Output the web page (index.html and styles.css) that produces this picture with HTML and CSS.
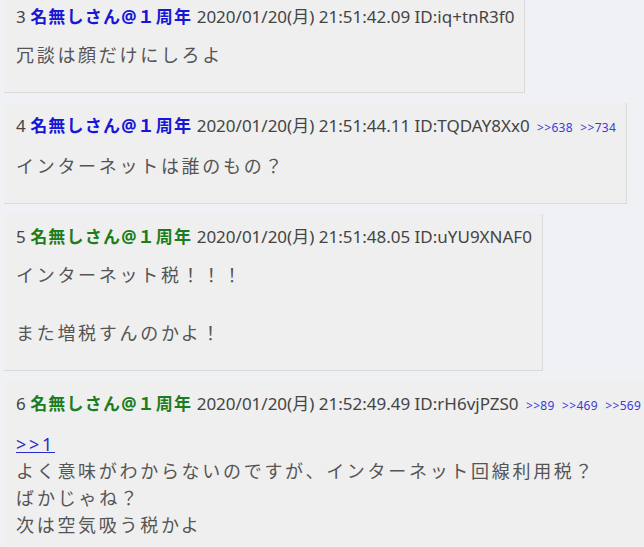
FILE: index.html
```html
<!DOCTYPE html>
<html lang="ja">
<head>
  <meta charset="UTF-8">
  <meta name="viewport" content="width=device-width, initial-scale=1.0">
  <title>スレッド</title>
  <link rel="stylesheet" href="styles.css">
</head>
<body>
  <div class="thread">
    <div class="post">
      <div class="meta">
        <span class="number">3</span>
        <span class="name">名無しさん@１周年</span>
        <span class="date">2020/01/20(月) 21:51:42.09</span>
        <span class="uid">ID:iq+tnR3f0</span>
      </div>
      <div class="message">冗談は顔だけにしろよ</div>
    </div>

    <div class="post">
      <div class="meta">
        <span class="number">4</span>
        <span class="name">名無しさん@１周年</span>
        <span class="date">2020/01/20(月) 21:51:44.11</span>
        <span class="uid">ID:TQDAY8Xx0</span>
        <span class="replies"><a href="#">&gt;&gt;638</a> <a href="#">&gt;&gt;734</a></span>
      </div>
      <div class="message">インターネットは誰のもの？</div>
    </div>

    <div class="post">
      <div class="meta">
        <span class="number">5</span>
        <span class="name green">名無しさん@１周年</span>
        <span class="date">2020/01/20(月) 21:51:48.05</span>
        <span class="uid">ID:uYU9XNAF0</span>
      </div>
      <div class="message">インターネット税！！！<br><br>また増税すんのかよ！</div>
    </div>

    <div class="post">
      <div class="meta">
        <span class="number">6</span>
        <span class="name green">名無しさん@１周年</span>
        <span class="date">2020/01/20(月) 21:52:49.49</span>
        <span class="uid">ID:rH6vjPZS0</span>
        <span class="replies"><a href="#">&gt;&gt;89</a> <a href="#">&gt;&gt;469</a> <a href="#">&gt;&gt;569</a></span>
      </div>
      <div class="message tight"><a href="#" class="anchor">&gt;&gt;1</a><br>よく意味がわからないのですが、インターネット回線利用税？<br>ばかじゃね？<br>次は空気吸う税かよ</div>
    </div>
  </div>
</body>
</html>
```

FILE: styles.css
```css
html, body {
  overflow: hidden;
}

body {
  margin: 0;
  padding: 0 0 0 4px;
  background-color: #f0f1f5;
  font-family: 'Noto Sans', 'Noto Sans CJK JP', sans-serif;
  color: #444;
}

.thread {
  display: flex;
  flex-direction: column;
  align-items: flex-start;
  gap: 10px;
  margin-top: -6px;
}

.post {
  background-color: #efefef;
  border-right: 1px solid #dadada;
  border-bottom: 1px solid #dadada;
  padding: 12px 10px 22px 12px;
  white-space: nowrap;
}

.meta {
  font-size: 17px;
  line-height: 22px;
  color: #444;
}

.name {
  color: #1616d4;
  font-weight: bold;
  letter-spacing: 1.2px;
}

.name.green {
  color: #1b7d1b;
}

.replies a {
  font-size: 12px;
  color: #3b3bd9;
  text-decoration: none;
  letter-spacing: 0.3px;
  margin-left: 3px;
}

.message {
  margin-top: 13px;
  font-size: 18px;
  line-height: 29px;
  letter-spacing: 2.7px;
  color: #555;
}

.message.tight {
  line-height: 27px;
  margin-top: 14px;
}

.message a.anchor {
  color: #2a2acc;
  text-decoration: underline;
}
```
